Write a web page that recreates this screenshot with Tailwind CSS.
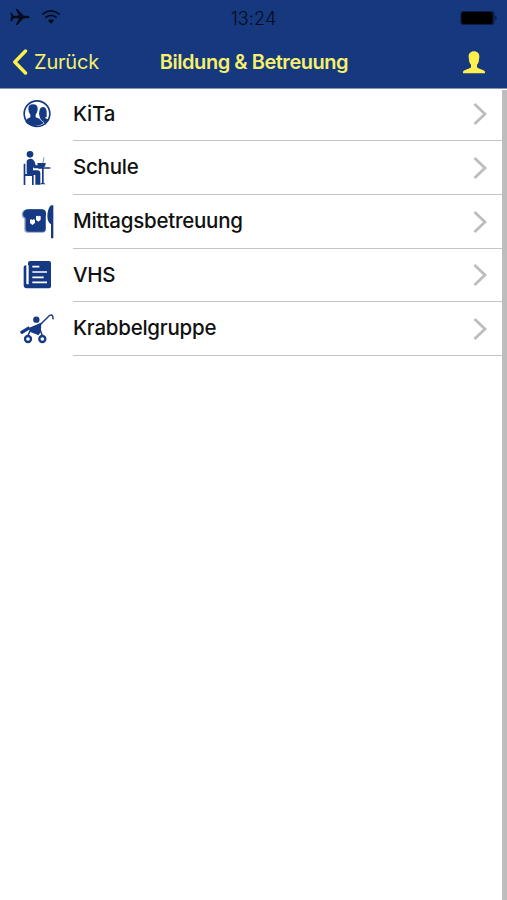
<!DOCTYPE html>
<html lang="de">
<head>
<meta charset="utf-8">
<title>Bildung &amp; Betreuung</title>
<script src="https://cdn.jsdelivr.net/npm/@tailwindcss/browser@4"></script>
</head>
<body class="w-[507px] h-[900px] overflow-hidden bg-white font-['Inter','Liberation_Sans',sans-serif] flex flex-col">
<header class="h-[89px] shrink-0 bg-[#15387f] border-b border-[#8194b8] flex flex-col">
  <div class="h-9 grid grid-cols-3 items-center px-[10px] text-[#050b19]">
    <div class="flex items-center gap-[11px]">
      <svg class="w-5 h-[18px] -mt-[2px]" viewBox="0 0 60 54" fill="currentColor"><path d="M1 14h4l6 9h16L17 3h5l19 20h12q6 1 6 4t-6 4H41L22 51h-5l10-20H11l-6 9H1l3-13z"/></svg>
      <svg class="w-5 h-[18px] -mt-[3px]" viewBox="0 0 60 54" fill="none" stroke="currentColor" stroke-width="5"><path d="M4 19q26-21 52 0M13 29q17-14 34 0"/><path d="M21 38q9-8 18 0l-9 9z" fill="currentColor" stroke="none"/></svg>
    </div>
    <time class="text-center text-[18px] tracking-[0.1px] font-light">13:24</time>
    <div class="flex justify-end items-center"><svg class="w-[38px] h-[16px] -mt-px" viewBox="0 0 38 16"><rect x="1.5" y="1" width="34" height="14" rx="3" fill="#0a1d47"/><rect x="2.5" y="2" width="31" height="12" rx="2" fill="#000"/><path d="M36.5 5.5q2 2.5 0 5z" fill="#030a1b"/></svg></div>
  </div>
  <div class="h-[52px] grid grid-cols-[150px_1fr_150px] items-center text-[#f6f06c]">
    <div class="flex items-center pl-[12px] gap-[6px]">
      <svg class="w-4 h-[26px]" viewBox="0 0 16 26" fill="none" stroke="#fff04d" stroke-width="3.4" stroke-linecap="round" stroke-linejoin="round"><path d="M13.5 2 2.8 13l10.7 11"/></svg>
      <span class="text-[20px] tracking-[-0.2px]">Zurück</span>
    </div>
    <h1 class="text-center text-[20px] font-semibold tracking-[-0.46px] whitespace-nowrap pl-px">Bildung &amp; Betreuung</h1>
    <div class="flex justify-end pr-[22px]"><svg class="w-[22px] h-[23px]" viewBox="0 0 66 69" fill="#fff04d"><path d="M33 1C43 1 50 8 49 18l-1 8c0 7-3 11-6 15v8c3 5 20 6 24 13v5H0v-5c4-7 21-8 24-13v-8c-3-4-6-8-6-15l-1-8C16 8 23 1 33 1z"/></svg></div>
  </div>
</header>
<div class="flex-1 flex">
  <main class="flex-1">
    <ul class="text-[20.5px] font-medium tracking-[-0.25px] text-[#111]">
      <li class="h-[52px] flex">
        <div class="w-[73px] pl-[10px] flex items-center"><svg class="w-[60px] h-[50px] shrink-0" viewBox="0 0 180 150" fill="#153982"><circle cx="81" cy="71" r="38.5" fill="#fff" stroke="#153982" stroke-width="5"/><path d="M46 95q4-10 15-13v-8q-6-7-6-17-1-14 14-14t14 14q0 10-6 17v8l15 6 9 12q-12 8-25 8-20 0-30-13z"/><path d="M90 84q-5-12-2-20 2-13 11-13t11 13v17l-4 1v3q8 2 10 6l-10 13-12-14z"/><path d="m88 86 15 13" stroke="#b9c4dd" stroke-width="3"/></svg></div>
        <div class="flex-1 border-b border-[#c4c4c4] flex items-center justify-between pr-[14px] pb-px"><span>KiTa</span><svg class="w-4 h-6" viewBox="0 0 16 24" fill="none" stroke="#bdbdbd" stroke-width="2.8"><path d="M2.5 2 13 12 2.5 22"/></svg></div>
      </li>
      <li class="h-[54px] flex">
        <div class="w-[73px] pl-[10px] flex items-center"><svg class="w-[60px] h-[50px] shrink-0" viewBox="0 0 180 150" fill="#153982"><circle cx="60" cy="34" r="10"/><path d="M50 55q2-9 14-8 7 1 10 9l3 11h12v9H72l-3-4v10h13q9 0 9 9v34H76V96H58q-8 0-8-8z"/><path d="M41 62h5v31h25v33h-5V99H46v27h-5z"/><path d="M85 73h36v4h-20v42l6 5H88l8-5V77H85z"/><path d="M82 60h25q0 15-13 15-12 0-12-15z"/><path d="M99 60l3-17" stroke="#8393bd" stroke-width="3"/></svg></div>
        <div class="flex-1 border-b border-[#c4c4c4] flex items-center justify-between pr-[14px]"><span>Schule</span><svg class="w-4 h-6" viewBox="0 0 16 24" fill="none" stroke="#bdbdbd" stroke-width="2.8"><path d="M2.5 2 13 12 2.5 22"/></svg></div>
      </li>
      <li class="h-[53.5px] flex">
        <div class="w-[73px] pl-[10px] flex items-center"><svg class="w-[60px] h-[50px] shrink-0" viewBox="0 0 180 150" fill="#153982"><path d="M35 50q3-13 18-13h41q14 0 14 13 0 7-1 9v39q0 9-9 9H52q-9 0-9-9V66q-9-7-8-16z" fill="#8fa0c8"/><path d="M39 50q3-13 18-13h37q14 0 14 13 0 7-1 9v36q0 9-9 9H56q-9 0-9-9V64q-9-6-8-14z"/><path d="M60 69q3-4 7 0 4-4 8 0v9l-8 6-7-6zM78 58q3-4 7 0 4-4 7 0v10l-7 6-7-6z" fill="#fff"/><path d="M130 25v99h-7V82q-11-7-11-26 1-22 11-31z"/></svg></div>
        <div class="flex-1 border-b border-[#c4c4c4] flex items-center justify-between pr-[14px] pt-px"><span>Mittagsbetreuung</span><svg class="w-4 h-6" viewBox="0 0 16 24" fill="none" stroke="#bdbdbd" stroke-width="2.8"><path d="M2.5 2 13 12 2.5 22"/></svg></div>
      </li>
      <li class="h-[53.5px] flex">
        <div class="w-[73px] pl-[10px] flex items-center"><svg class="w-[60px] h-[50px] shrink-0" viewBox="0 0 180 150" fill="#153982"><rect x="54" y="33" width="69" height="82" rx="6"/><path d="M41 53q0-7 8-7v56h5V46h5v69h-9q-9 0-9-9z"/><path d="M51 46v57h5V46" fill="#fff"/><path d="M67 50h21M67 66h44M67 82h34M67 97h44" stroke="#fff" stroke-width="5"/></svg></div>
        <div class="flex-1 border-b border-[#c4c4c4] flex items-center justify-between pr-[14px] pt-px"><span>VHS</span><svg class="w-4 h-6" viewBox="0 0 16 24" fill="none" stroke="#bdbdbd" stroke-width="2.8"><path d="M2.5 2 13 12 2.5 22"/></svg></div>
      </li>
      <li class="h-[54px] flex">
        <div class="w-[73px] pl-[10px] flex items-center"><svg class="w-[60px] h-[50px] shrink-0" viewBox="0 0 180 150" fill="#153982"><circle cx="79" cy="47" r="9.5"/><path d="m31 82 25-15 5 8-24 15q-8-1-6-8zM56 72l30-13 7-3q3 22-7 38L61 84z"/><g fill="none" stroke="#153982"><path d="M86 67 119 34q11-5 10 12M88 70l9 26M61 79l-8 17" stroke-width="4.5"/><circle cx="54" cy="105" r="9" stroke-width="7"/><circle cx="97" cy="105" r="9" stroke-width="7"/></g></svg></div>
        <div class="flex-1 border-b border-[#c4c4c4] flex items-center justify-between pr-[14px]"><span>Krabbelgruppe</span><svg class="w-4 h-6" viewBox="0 0 16 24" fill="none" stroke="#bdbdbd" stroke-width="2.8"><path d="M2.5 2 13 12 2.5 22"/></svg></div>
      </li>
    </ul>
  </main>
  <div class="w-[5px] bg-[#bdbdbd] mt-px"></div>
</div>
</body>
</html>
